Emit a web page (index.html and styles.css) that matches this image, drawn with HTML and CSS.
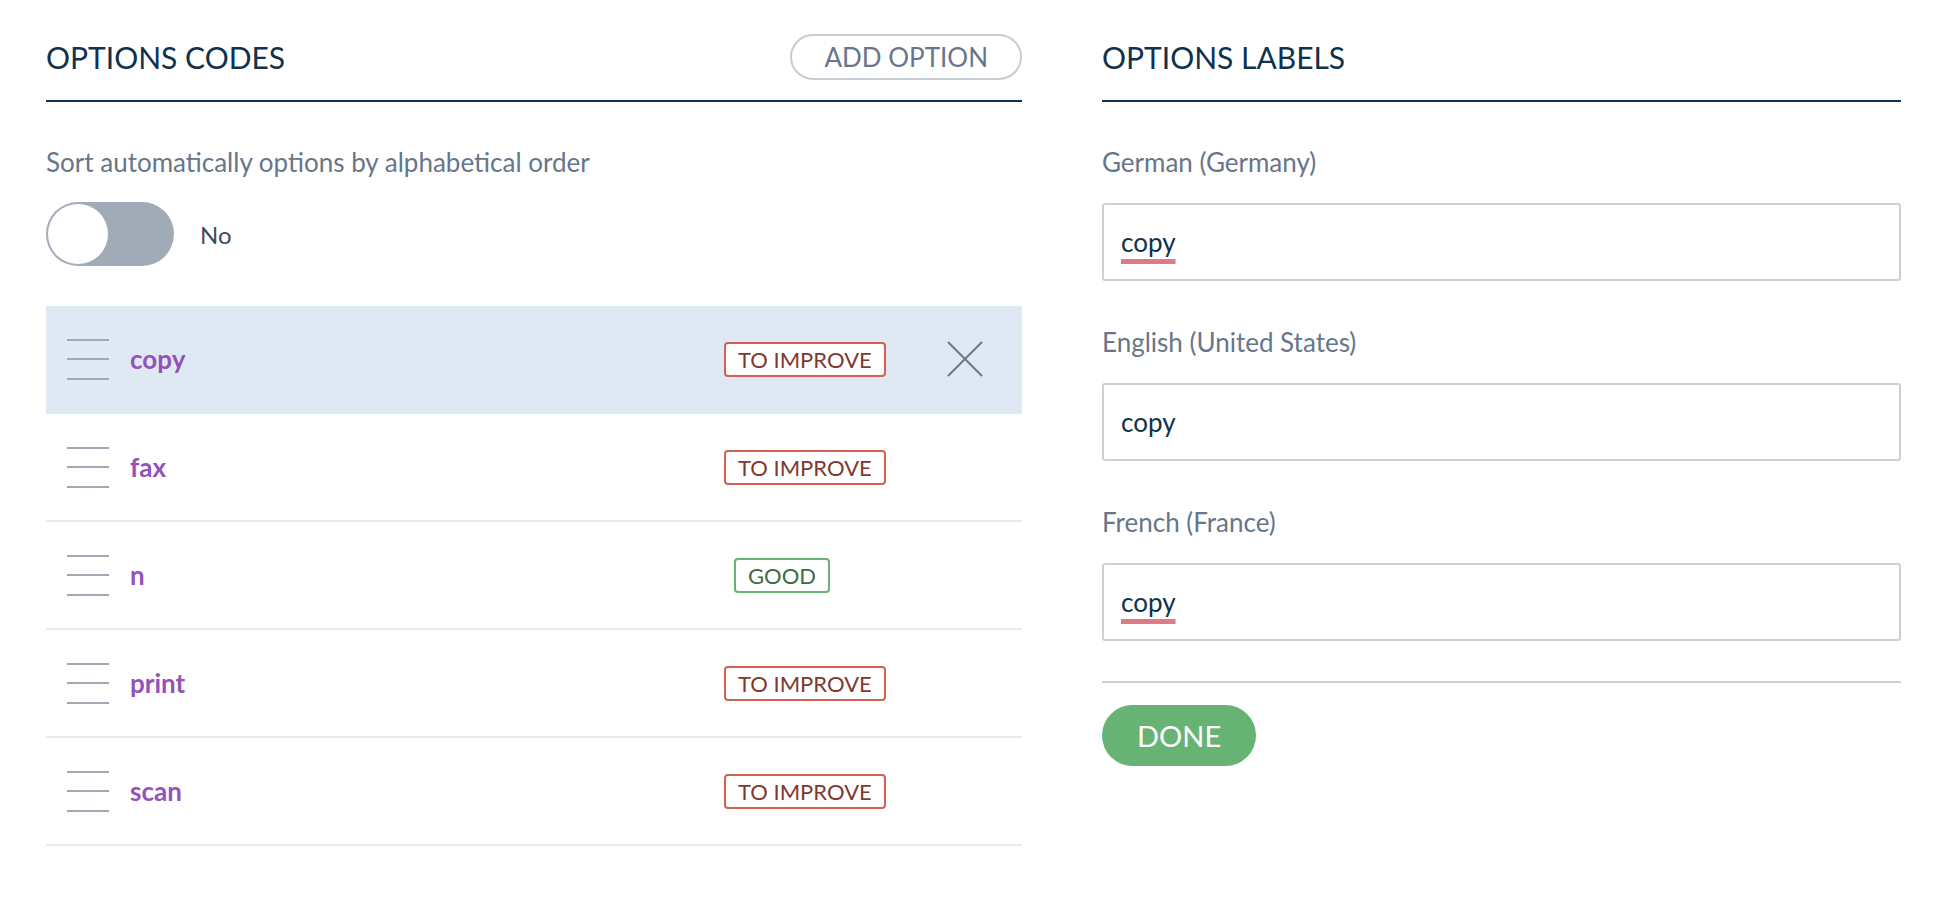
FILE: index.html
```html
<!DOCTYPE html>
<html lang="en">
<head>
<meta charset="utf-8">
<title>Options</title>
<link rel="stylesheet" href="styles.css">
</head>
<body>
<div class="page">
  <section class="col col-codes">
    <header class="section-header">
      <h2 class="section-title">Options codes</h2>
      <button class="btn-outline" type="button">Add option</button>
    </header>

    <div class="sort-label">Sort automatically options by alphabetical order</div>
    <div class="switch-row">
      <span class="switch"><span class="switch-knob"></span></span>
      <span class="switch-text">No</span>
    </div>

    <ul class="option-list">
      <li class="option-row is-active">
        <span class="handle"><i></i><i></i><i></i></span>
        <span class="option-code">copy</span>
        <span class="badge-cell"><span class="badge badge-warn">To improve</span></span>
        <span class="remove">
          <svg viewBox="0 0 36 36" width="36" height="36"><path d="M1 1 L35 35 M35 1 L1 35" stroke="#6b778a" stroke-width="2" fill="none"/></svg>
        </span>
      </li>
      <li class="option-row">
        <span class="handle"><i></i><i></i><i></i></span>
        <span class="option-code">fax</span>
        <span class="badge-cell"><span class="badge badge-warn">To improve</span></span>
        <span class="remove is-hidden"></span>
      </li>
      <li class="option-row">
        <span class="handle"><i></i><i></i><i></i></span>
        <span class="option-code">n</span>
        <span class="badge-cell"><span class="badge badge-good">Good</span></span>
        <span class="remove is-hidden"></span>
      </li>
      <li class="option-row">
        <span class="handle"><i></i><i></i><i></i></span>
        <span class="option-code">print</span>
        <span class="badge-cell"><span class="badge badge-warn">To improve</span></span>
        <span class="remove is-hidden"></span>
      </li>
      <li class="option-row">
        <span class="handle"><i></i><i></i><i></i></span>
        <span class="option-code">scan</span>
        <span class="badge-cell"><span class="badge badge-warn">To improve</span></span>
        <span class="remove is-hidden"></span>
      </li>
    </ul>
  </section>

  <section class="col col-labels">
    <header class="section-header">
      <h2 class="section-title">Options labels</h2>
    </header>

    <div class="fields">
      <div class="field">
        <div class="field-label">German (Germany)</div>
        <div class="field-input"><span class="misspelled">copy</span></div>
      </div>
      <div class="field">
        <div class="field-label">English (United States)</div>
        <div class="field-input">copy</div>
      </div>
      <div class="field">
        <div class="field-label">French (France)</div>
        <div class="field-input"><span class="misspelled">copy</span></div>
      </div>
    </div>

    <div class="footer">
      <button class="btn-done" type="button">Done</button>
    </div>
  </section>
</div>
</body>
</html>
```

FILE: styles.css
```css
* { box-sizing: border-box; }

html, body {
  margin: 0;
  padding: 0;
  background: #ffffff;
}

body {
  font-family: "Lato", "Noto Sans", "Liberation Sans", sans-serif;
  color: #11324d;
}

.page {
  display: flex;
  gap: 80px;
  padding: 34px 37px 0 46px;
}

.col-codes { width: 976px; flex: none; }
.col-labels { flex: 1; }

.section-header {
  display: flex;
  align-items: center;
  justify-content: space-between;
  min-height: 66px;
  padding-bottom: 20px;
  border-bottom: 2px solid #11324d;
}

.section-title {
  margin: 0;
  font-size: 30px;
  font-weight: 400;
  text-transform: uppercase;
  color: #11324d;
  line-height: 46px;
}

.btn-outline {
  height: 46px;
  padding: 0 32px;
  border: 2px solid #c7cbd4;
  border-radius: 23px;
  background: #ffffff;
  color: #67768a;
  font-family: inherit;
  font-size: 26px;
  text-transform: uppercase;
  line-height: 42px;
}

.sort-label {
  margin-top: 45px;
  font-size: 26px;
  line-height: 30px;
  color: #67768a;
}

.switch-row {
  display: flex;
  align-items: center;
  gap: 26px;
  margin-top: 25px;
}

.switch {
  display: flex;
  align-items: center;
  width: 128px;
  height: 64px;
  padding: 1px;
  border-radius: 32px;
  background: #a1aab7;
}

.switch-knob {
  width: 62px;
  height: 62px;
  border-radius: 50%;
  background: #ffffff;
  border: 1px solid #a1aab7;
}

.switch-text {
  font-size: 24px;
  color: #3d4a5c;
}

.option-list {
  list-style: none;
  margin: 40px 0 0;
  padding: 0;
}

.option-row {
  display: flex;
  align-items: center;
  height: 108px;
  padding: 0 39px 0 21px;
  border-bottom: 2px solid #e6e9ed;
}

.option-row.is-active {
  background: #dfe9f3;
  border-bottom-color: #dfe9f3;
}

.handle {
  display: flex;
  flex-direction: column;
  justify-content: space-between;
  width: 42px;
  height: 41px;
  flex: none;
}

.handle i {
  display: block;
  height: 2px;
  background: #a1a9b7;
}

.option-code {
  flex: 1;
  margin-left: 21px;
  font-size: 26px;
  font-weight: 700;
  color: #9452ba;
}

.badge-cell {
  width: 200px;
  flex: none;
  display: flex;
}

.badge {
  display: inline-flex;
  align-items: center;
  height: 35px;
  padding: 0 12px;
  border: 2px solid;
  border-radius: 4px;
  background: #ffffff;
  font-size: 22px;
  text-transform: uppercase;
}

.badge-warn {
  border-color: #d4604f;
  color: #7f392f;
}

.badge-good {
  margin-left: 10px;
  border-color: #67b373;
  color: #3d6b45;
}

.remove {
  width: 36px;
  height: 36px;
  margin-left: 23px;
  flex: none;
  display: flex;
}

.remove.is-hidden { visibility: hidden; }

.fields {
  display: flex;
  flex-direction: column;
  gap: 46px;
  margin-top: 45px;
}

.field-label {
  font-size: 26px;
  line-height: 30px;
  color: #67768a;
}

.field-input {
  display: flex;
  align-items: center;
  height: 78px;
  margin-top: 26px;
  padding: 0 17px;
  border: 2px solid #ccd1d8;
  border-radius: 3px;
  font-size: 26px;
  color: #11324d;
}

.misspelled {
  text-decoration: underline;
  text-decoration-color: #dd7b88;
  text-decoration-thickness: 5px;
  text-underline-offset: 7px;
}

.footer {
  margin-top: 40px;
  padding-top: 22px;
  border-top: 2px solid #ccd1d8;
}

.btn-done {
  height: 61px;
  padding: 0 35px;
  border: none;
  border-radius: 31px;
  background: #67b373;
  color: #ffffff;
  font-family: inherit;
  font-size: 29px;
  text-transform: uppercase;
}
```
